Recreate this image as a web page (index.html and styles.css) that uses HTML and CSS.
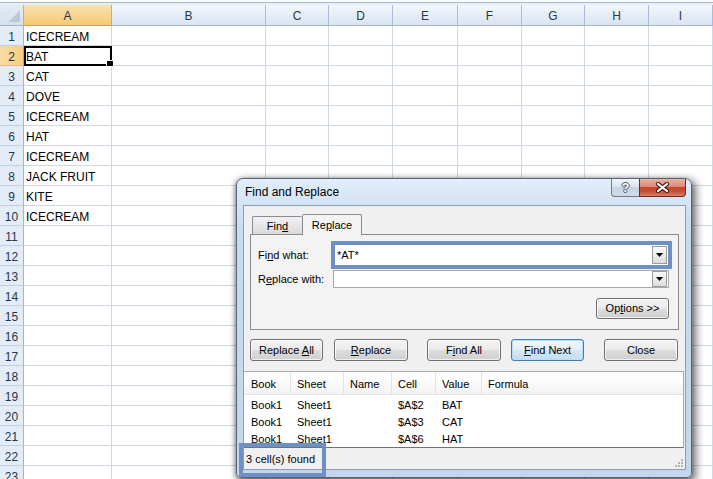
FILE: index.html
```html
<!DOCTYPE html>
<html>
<head>
<meta charset="utf-8">
<title>Find and Replace</title>
<link rel="stylesheet" href="styles.css">
</head>
<body>
<div class="topstrip"></div>
<div class="sheet">
  <em class="corner"></em><em class="on">A</em><em>B</em><em>C</em><em>D</em><em>E</em><em>F</em><em>G</em><em>H</em><em>I</em>
  <b>1</b><span>ICECREAM</span><i></i><i></i><i></i><i></i><i></i><i></i><i></i><i></i>
  <b class="on">2</b><span class="sel">BAT</span><i></i><i></i><i></i><i></i><i></i><i></i><i></i><i></i>
  <b>3</b><span>CAT</span><i></i><i></i><i></i><i></i><i></i><i></i><i></i><i></i>
  <b>4</b><span>DOVE</span><i></i><i></i><i></i><i></i><i></i><i></i><i></i><i></i>
  <b>5</b><span>ICECREAM</span><i></i><i></i><i></i><i></i><i></i><i></i><i></i><i></i>
  <b>6</b><span>HAT</span><i></i><i></i><i></i><i></i><i></i><i></i><i></i><i></i>
  <b>7</b><span>ICECREAM</span><i></i><i></i><i></i><i></i><i></i><i></i><i></i><i></i>
  <b>8</b><span>JACK FRUIT</span><i></i><i></i><i></i><i></i><i></i><i></i><i></i><i></i>
  <b>9</b><span>KITE</span><i></i><i></i><i></i><i></i><i></i><i></i><i></i><i></i>
  <b>10</b><span>ICECREAM</span><i></i><i></i><i></i><i></i><i></i><i></i><i></i><i></i>
  <b>11</b><span></span><i></i><i></i><i></i><i></i><i></i><i></i><i></i><i></i>
  <b>12</b><span></span><i></i><i></i><i></i><i></i><i></i><i></i><i></i><i></i>
  <b>13</b><span></span><i></i><i></i><i></i><i></i><i></i><i></i><i></i><i></i>
  <b>14</b><span></span><i></i><i></i><i></i><i></i><i></i><i></i><i></i><i></i>
  <b>15</b><span></span><i></i><i></i><i></i><i></i><i></i><i></i><i></i><i></i>
  <b>16</b><span></span><i></i><i></i><i></i><i></i><i></i><i></i><i></i><i></i>
  <b>17</b><span></span><i></i><i></i><i></i><i></i><i></i><i></i><i></i><i></i>
  <b>18</b><span></span><i></i><i></i><i></i><i></i><i></i><i></i><i></i><i></i>
  <b>19</b><span></span><i></i><i></i><i></i><i></i><i></i><i></i><i></i><i></i>
  <b>20</b><span></span><i></i><i></i><i></i><i></i><i></i><i></i><i></i><i></i>
  <b>21</b><span></span><i></i><i></i><i></i><i></i><i></i><i></i><i></i><i></i>
  <b>22</b><span></span><i></i><i></i><i></i><i></i><i></i><i></i><i></i><i></i>
  <b>23</b><span></span><i></i><i></i><i></i><i></i><i></i><i></i><i></i><i></i>
</div>

<div class="dlg">
  <div class="titlebar">
    <span class="title">Find and Replace</span>
    <div class="capbtns">
      <span class="help">?</span>
      <span class="close"><svg width="15" height="11" viewBox="0 0 15 11"><path d="M3 2 L12 9 M12 2 L3 9" stroke="#4a1d14" stroke-width="4.2" stroke-linecap="round"/><path d="M3 2 L12 9 M12 2 L3 9" stroke="#fff" stroke-width="2.2" stroke-linecap="round"/></svg></span>
    </div>
  </div>
  <div class="body">
    <div class="tabs">
      <span class="tab">Fin<u>d</u></span>
      <span class="tab active">Re<u>p</u>lace</span>
    </div>
    <div class="panel">
      <div class="frow">
        <label class="lbl1">Fi<u>n</u>d what:</label>
        <div class="combo hl"><span class="val">*AT*</span><span class="dd"><svg width="7" height="4" viewBox="0 0 7 4"><path d="M0 0 H7 L3.5 4 Z" fill="#000"/></svg></span></div>
      </div>
      <div class="frow r2">
        <label class="lbl2">R<u>e</u>place with:</label>
        <div class="combo plain"><span class="val"></span><span class="dd"><svg width="7" height="4" viewBox="0 0 7 4"><path d="M0 0 H7 L3.5 4 Z" fill="#000"/></svg></span></div>
      </div>
      <div class="optrow"><span class="btn opt">Op<u>t</u>ions &gt;&gt;</span></div>
    </div>
    <div class="btnrow">
      <span class="btn b1">Replace <u>A</u>ll</span>
      <span class="btn b2"><u>R</u>eplace</span>
      <span class="btn b3">F<u>i</u>nd All</span>
      <span class="btn b4 def"><u>F</u>ind Next</span>
      <span class="btn b5">Close</span>
    </div>
    <div class="list">
      <div class="lrow lhead"><span>Book</span><span>Sheet</span><span>Name</span><span>Cell</span><span>Value</span><span>Formula</span></div>
      <div class="lrow"><span>Book1</span><span>Sheet1</span><span></span><span>$A$2</span><span>BAT</span><span></span></div>
      <div class="lrow"><span>Book1</span><span>Sheet1</span><span></span><span>$A$3</span><span>CAT</span><span></span></div>
      <div class="lrow"><span>Book1</span><span>Sheet1</span><span></span><span>$A$6</span><span>HAT</span><span></span></div>
    </div>
    <div class="status">
      <span>3 cell(s) found</span>
      <svg class="grip" width="8" height="8" viewBox="0 0 8 8"><g fill="#b4b4b4"><rect x="6" y="0" width="2" height="2"/><rect x="3" y="3" width="2" height="2"/><rect x="6" y="3" width="2" height="2"/><rect x="0" y="6" width="2" height="2"/><rect x="3" y="6" width="2" height="2"/><rect x="6" y="6" width="2" height="2"/></g></svg>
    </div>
  </div>
</div>
<div class="annot"></div>
</body>
</html>
```
FILE: styles.css
```css
* { box-sizing: border-box; }
html, body { margin: 0; padding: 0; }
body {
  width: 713px;
  height: 479px;
  overflow: hidden;
  position: relative;
  background: #fff;
  font-family: "Liberation Sans", Arial, sans-serif;
}

.topstrip {
  height: 5px;
  background: linear-gradient(#fbfcfe 0, #fbfcfe 2px, #a9b8cc 2px, #a9b8cc 3px, #e9eef6 3px);
}

.sheet {
  display: grid;
  grid-template-columns: 24px 88px 154px 63px 64px 65px 64px 63px 64px 64px;
  grid-template-rows: 21px;
  grid-auto-rows: 20px;
  font-size: 12px;
  color: #000;
}
.sheet > * {
  border-right: 1px solid #d0d7e5;
  border-bottom: 1px solid #d0d7e5;
  font-style: normal;
  font-weight: normal;
  white-space: nowrap;
  overflow: visible;
}
.sheet em {
  text-align: center;
  line-height: 20px;
  padding-top: 1px;
  color: #28374b;
  background: linear-gradient(#f4f7fb, #e4ebf5 60%, #dae3ef);
  border-right-color: #a9bcd3;
  border-bottom-color: #9eb6ce;
}
.sheet em.corner {
  background:
    linear-gradient(135deg, transparent 50%, #bcc8d7 50%) right 3px bottom 3px / 11px 11px no-repeat,
    linear-gradient(#e3eaf4, #d6e0ec);
  border-right-color: #9eb6ce;
}
.sheet em.on {
  background: linear-gradient(#fae2b0, #f8d594 50%, #f6c872);
  border-right-color: #f2a24c;
  border-bottom-color: #f29536;
}
.sheet b {
  text-align: center;
  line-height: 18px;
  padding-top: 2px;
  color: #28374b;
  background: #e4ecf7;
  border-right-color: #9eb6ce;
  border-bottom-color: #c3d0e0;
}
.sheet b.on {
  background: linear-gradient(90deg, #f9dca4, #f6cd7e);
  border-right-color: #f29536;
  border-bottom-color: #f2b36a;
}
.sheet span {
  padding-left: 2px;
  padding-top: 2px;
  line-height: 18px;
}
.sheet span.sel {
  position: relative;
  z-index: 1;
  outline: 2px solid #000;
  outline-offset: -2px;
}
.sheet span.sel::after {
  content: "";
  position: absolute;
  right: -3px;
  bottom: -2px;
  width: 6px;
  height: 5px;
  background: #000;
  border: 1px solid #fff;
}

/* ---------- Dialog ---------- */
.dlg {
  position: absolute;
  left: 236px;
  top: 178px;
  width: 456px;
  height: 300px;
  border: 1px solid #58657a;
  border-radius: 7px 7px 5px 5px;
  background: linear-gradient(#e2edf9, #d3e3f4 26px, #c7daf0 60px, #c3d6ee);
  box-shadow: 3px 3px 8px 1px rgba(0, 0, 0, .55), -1px 1px 4px rgba(0, 0, 0, .35);
  padding: 0 5px 7px 6px;
  display: flex;
  flex-direction: column;
  font-size: 11px;
  color: #000;
  z-index: 5;
}
.titlebar {
  height: 26px;
  display: flex;
  align-items: center;
}
.title {
  font-size: 12px;
  padding-left: 2px;
  flex: 1;
}
.capbtns {
  align-self: flex-start;
  display: flex;
}
.help, .close {
  height: 18px;
  display: flex;
  align-items: center;
  justify-content: center;
}
.help {
  width: 28px;
  border: 1px solid #6c7b90;
  border-top: 0;
  border-right: 0;
  border-radius: 0 0 0 4px;
  background: linear-gradient(#eef3f9, #dde6f1 45%, #c6d3e3 50%, #cfdbe8);
  font-weight: bold;
  font-size: 13px;
  color: #fff;
  text-shadow: 1px 0 #4d5a6b, -1px 0 #4d5a6b, 0 1px #4d5a6b, 0 -1px #4d5a6b;
}
.close {
  width: 47px;
  border: 1px solid #6a2b22;
  border-top: 0;
  border-radius: 0 0 4px 0;
  background: linear-gradient(#eab3a3, #d98b76 45%, #c5452f 50%, #c9503a 75%, #db7f66);
}

.body {
  height: 265px;
  background: #f0f0f0;
  border: 1px solid #8d9db3;
  display: flex;
  flex-direction: column;
}
.tabs {
  display: flex;
  align-items: flex-end;
  height: 28px;
  padding-top: 8px;
  padding-left: 8px;
}
.tab {
  height: 18px;
  border: 1px solid #898c95;
  border-bottom: 0;
  border-radius: 2px 2px 0 0;
  display: flex;
  align-items: center;
  justify-content: center;
  background: linear-gradient(#f2f2f2, #e6e6e6 50%, #d9d9d9);
}
.tab:first-child { width: 50px; border-right: 0; }
.tab.active {
  width: 60px;
  height: 21px;
  margin-bottom: -1px;
  background: #f3f3f3;
  position: relative;
  z-index: 1;
  padding-bottom: 1px;
}
.panel {
  margin-left: 6px;
  width: 429px;
  height: 96px;
  border: 1px solid #898c95;
  background: #f3f3f3;
  padding: 6px 0 0 7px;
}
.frow {
  display: flex;
  align-items: center;
}
.lbl1 { width: 73px; }
.lbl2 { width: 75px; }
.frow.r2 { margin-top: 1px; }
.combo {
  display: flex;
  align-items: center;
  background: #fff;
}
.combo .val { flex: 1; padding-left: 2px; }
.combo.hl {
  width: 341px;
  height: 28px;
  border: 4px solid #6f90c2;
}
.combo.plain {
  width: 336px;
  height: 18px;
  border: 1px solid #a7a9ae;
}
.dd {
  width: 15px;
  height: 17px;
  margin-right: 1px;
  border: 1px solid #9c9c9c;
  background: linear-gradient(#fafafa, #ececec 50%, #dcdcdc);
  display: flex;
  align-items: center;
  justify-content: center;
}
.combo.hl .dd { height: 18px; }
.combo.plain .dd { height: 16px; }
.optrow {
  display: flex;
  justify-content: flex-end;
  padding-right: 9px;
  margin-top: 10px;
}
.btn {
  display: block;
  text-align: center;
  line-height: 20px;
  height: 22px;
  width: 74px;
  border: 1px solid #707070;
  border-radius: 3px;
  background: linear-gradient(#f3f3f3, #ebebeb 48%, #dddddd 52%, #cfcfcf);
  box-shadow: inset 0 0 0 1px rgba(255, 255, 255, .7);
  white-space: nowrap;
}
.btn.opt { width: 73px; height: 21px; line-height: 19px; }
.btnrow {
  display: flex;
  margin: 9px 0 0 6px;
}
.b1 { width: 73px; }
.b2 { margin-left: 11px; }
.b3 { margin-left: 19px; }
.b4 { margin-left: 10px; width: 73px; }
.b5 { margin-left: 20px; }
.btn.def {
  border-color: #3c7fb1;
  background: linear-gradient(#eef6fc, #e3effa 48%, #d3e6f5 52%, #c6def2);
  box-shadow: inset 0 0 0 1px #b9def4;
}
.list {
  margin-top: 10px;
  margin-right: 1px;
  height: 77px;
  background: #fff;
  border-top: 1px solid #a5a9b0;
  border-right: 1px solid #a5a9b0;
  border-bottom: 1px solid #6f737a;
  overflow: hidden;
}
.lrow {
  display: grid;
  grid-template-columns: 47px 53px 48px 44px 46px 1fr;
  height: 17px;
  align-items: center;
}
.lrow span { padding-left: 6px; white-space: nowrap; }
.lrow span:first-child { padding-left: 7px; }
.lhead {
  height: 23px;
  margin-bottom: 1px;
  background: linear-gradient(#ffffff, #fbfbfb 50%, #f2f2f2);
  border-bottom: 1px solid #e3e3e3;
  align-items: stretch;
}
.lhead span {
  display: flex;
  align-items: center;
  padding-top: 1px;
  border-right: 1px solid #e3e3e3;
}
.lhead span:last-child { border-right: 0; }
.status {
  flex: 1;
  display: flex;
  align-items: center;
  justify-content: space-between;
  padding: 1px 2px 0 2px;
}
.grip { align-self: flex-end; margin-bottom: 2px; }

.annot {
  position: absolute;
  left: 239px;
  top: 443px;
  width: 87px;
  height: 34px;
  border: 4px solid #6f90c2;
  z-index: 6;
}
```
